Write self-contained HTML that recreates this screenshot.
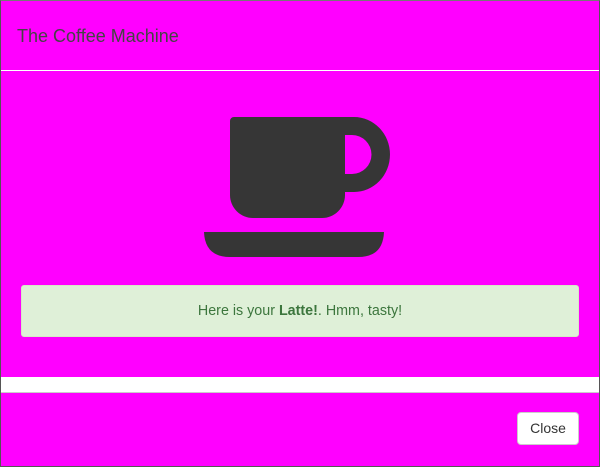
<!DOCTYPE html>
<html><head><meta charset="utf-8"><style>
html,body{margin:0;padding:0;}
body{width:600px;height:467px;position:relative;background:#ff00ff;font-family:"Liberation Sans",sans-serif;overflow:hidden;}
.frame{position:absolute;left:0;top:0;width:598px;height:465px;border:1px solid #555;border-top-color:#777;}
.title{position:absolute;left:17px;top:26px;font-size:18px;color:#444;}
.hl{position:absolute;left:1px;right:1px;top:70px;height:1px;background:#fff;}
.alert{position:absolute;left:21px;top:285px;width:556px;height:50px;background:#dff0d8;border:1px solid #d6e9c6;border-radius:3px;color:#3c763d;font-size:14.3px;text-align:center;line-height:50px;}
.band{position:absolute;left:1px;right:1px;top:377px;height:15px;background:#fff;border-bottom:1px solid #ccc;}
.btn{position:absolute;left:517px;top:412px;width:60px;height:31px;background:#fff;border:1px solid #ccc;border-radius:4px;font-size:14px;color:#333;text-align:center;line-height:31px;}
</style></head><body>
<div class="frame"></div>
<div class="title">The Coffee Machine</div>
<div class="hl"></div>
<svg style="position:absolute;left:0;top:0" width="600" height="300">
<path fill="#363636" fill-rule="evenodd" d="M234 117 H354 A36 37.5 0 0 1 354 192 H345 V195 A23 23 0 0 1 322 218 H253 A23 23 0 0 1 230 195 V121 A4 4 0 0 1 234 117 Z M345 135 V174 H352 A19.5 19.5 0 0 0 352 135 Z"/>
<path fill="#363636" d="M204 232 H384 Q383 257 358 257 H230 Q205 257 204 232 Z"/>
</svg>
<div class="alert">Here is your <b>Latte!</b>. Hmm, tasty!</div>
<div class="band"></div>
<div class="btn">Close</div>
</body></html>
